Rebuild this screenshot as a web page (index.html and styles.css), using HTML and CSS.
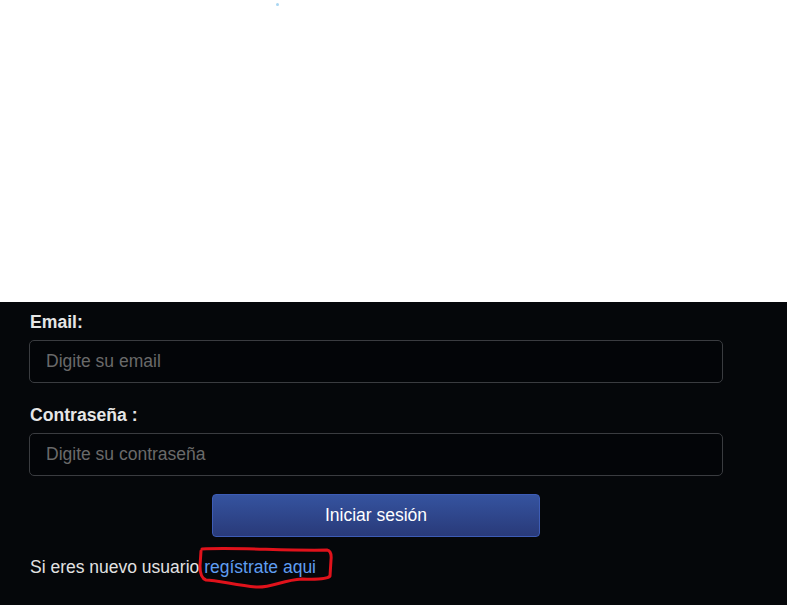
FILE: index.html
```html
<!DOCTYPE html>
<html lang="es">
<head>
<meta charset="utf-8">
<title>Login</title>
<link rel="stylesheet" href="styles.css">
</head>
<body>
<div class="top">
  <span class="dot"></span>
</div>
<div class="dark">
  <form class="form">
    <label class="label" for="email">Email:</label>
    <input class="input" id="email" type="text" placeholder="Digite su email">
    <label class="label label-2" for="pass">Contraseña :</label>
    <input class="input" id="pass" type="password" placeholder="Digite su contraseña">
    <div class="actions">
      <button class="btn" type="button">Iniciar sesión</button>
    </div>
    <p class="footer">Si eres nuevo usuario <a class="link" href="#">regístrate aqui</a></p>
  </form>
  <svg class="scribble" width="787" height="605" viewBox="0 0 787 605">
    <path d="M202,549 C235,547 285,551 327,550 Q332,551 331,560 L330,576 Q327,580 302,579 C282,580 272,588 256,587 C236,585 216,580 206,580 Q200,578 200,566 L201,551" fill="none" stroke="#e0121b" stroke-width="3" stroke-linecap="round" stroke-linejoin="round"/>
  </svg>
</div>
</body>
</html>
```
FILE: styles.css
```css
html, body {
  margin: 0;
  padding: 0;
}
body {
  font-family: "Liberation Sans", Arial, sans-serif;
  background: #05070a;
  position: relative;
  width: 787px;
  height: 605px;
  overflow: hidden;
}
.top {
  height: 302px;
  background: #ffffff;
  position: relative;
}
.dot {
  position: absolute;
  left: 276px;
  top: 3px;
  width: 3px;
  height: 3px;
  border-radius: 50%;
  background: #a9d6f2;
}
.dark {
  background: #05070a;
  height: 303px;
}
.form {
  margin: 0;
  padding: 10px 0 0 29px;
  width: 694px;
  display: flex;
  flex-direction: column;
}
.label {
  display: block;
  color: #e6e6e6;
  font-weight: bold;
  font-size: 17.6px;
  line-height: 20px;
  margin-bottom: 8px;
  margin-left: 1px;
}
.label-2 {
  margin-top: 22px;
}
.input {
  box-sizing: border-box;
  height: 43px;
  width: 694px;
  margin: 0;
  border: 1px solid #3a3c40;
  border-radius: 5px;
  background: #030508;
  padding: 0 16px;
  font-family: "Liberation Sans", Arial, sans-serif;
  font-size: 17.5px;
  color: #e6e6e6;
  outline: none;
}
.input::placeholder {
  color: #6a6a6a;
}
.actions {
  display: flex;
  justify-content: center;
  margin-top: 18px;
}
.btn {
  box-sizing: border-box;
  width: 328px;
  height: 43px;
  border: 1px solid #3d5cb6;
  border-radius: 4px;
  background: linear-gradient(#35539f, #293a79);
  color: #ffffff;
  font-family: "Liberation Sans", Arial, sans-serif;
  font-size: 17.5px;
  padding: 0;
}
.footer {
  margin: 19px 0 0 1px;
  font-size: 17.5px;
  line-height: 22px;
  color: #e2e2e2;
}
.link {
  color: #5f9ef2;
  text-decoration: none;
}
.scribble {
  position: absolute;
  left: 0;
  top: 0;
  pointer-events: none;
}
```
